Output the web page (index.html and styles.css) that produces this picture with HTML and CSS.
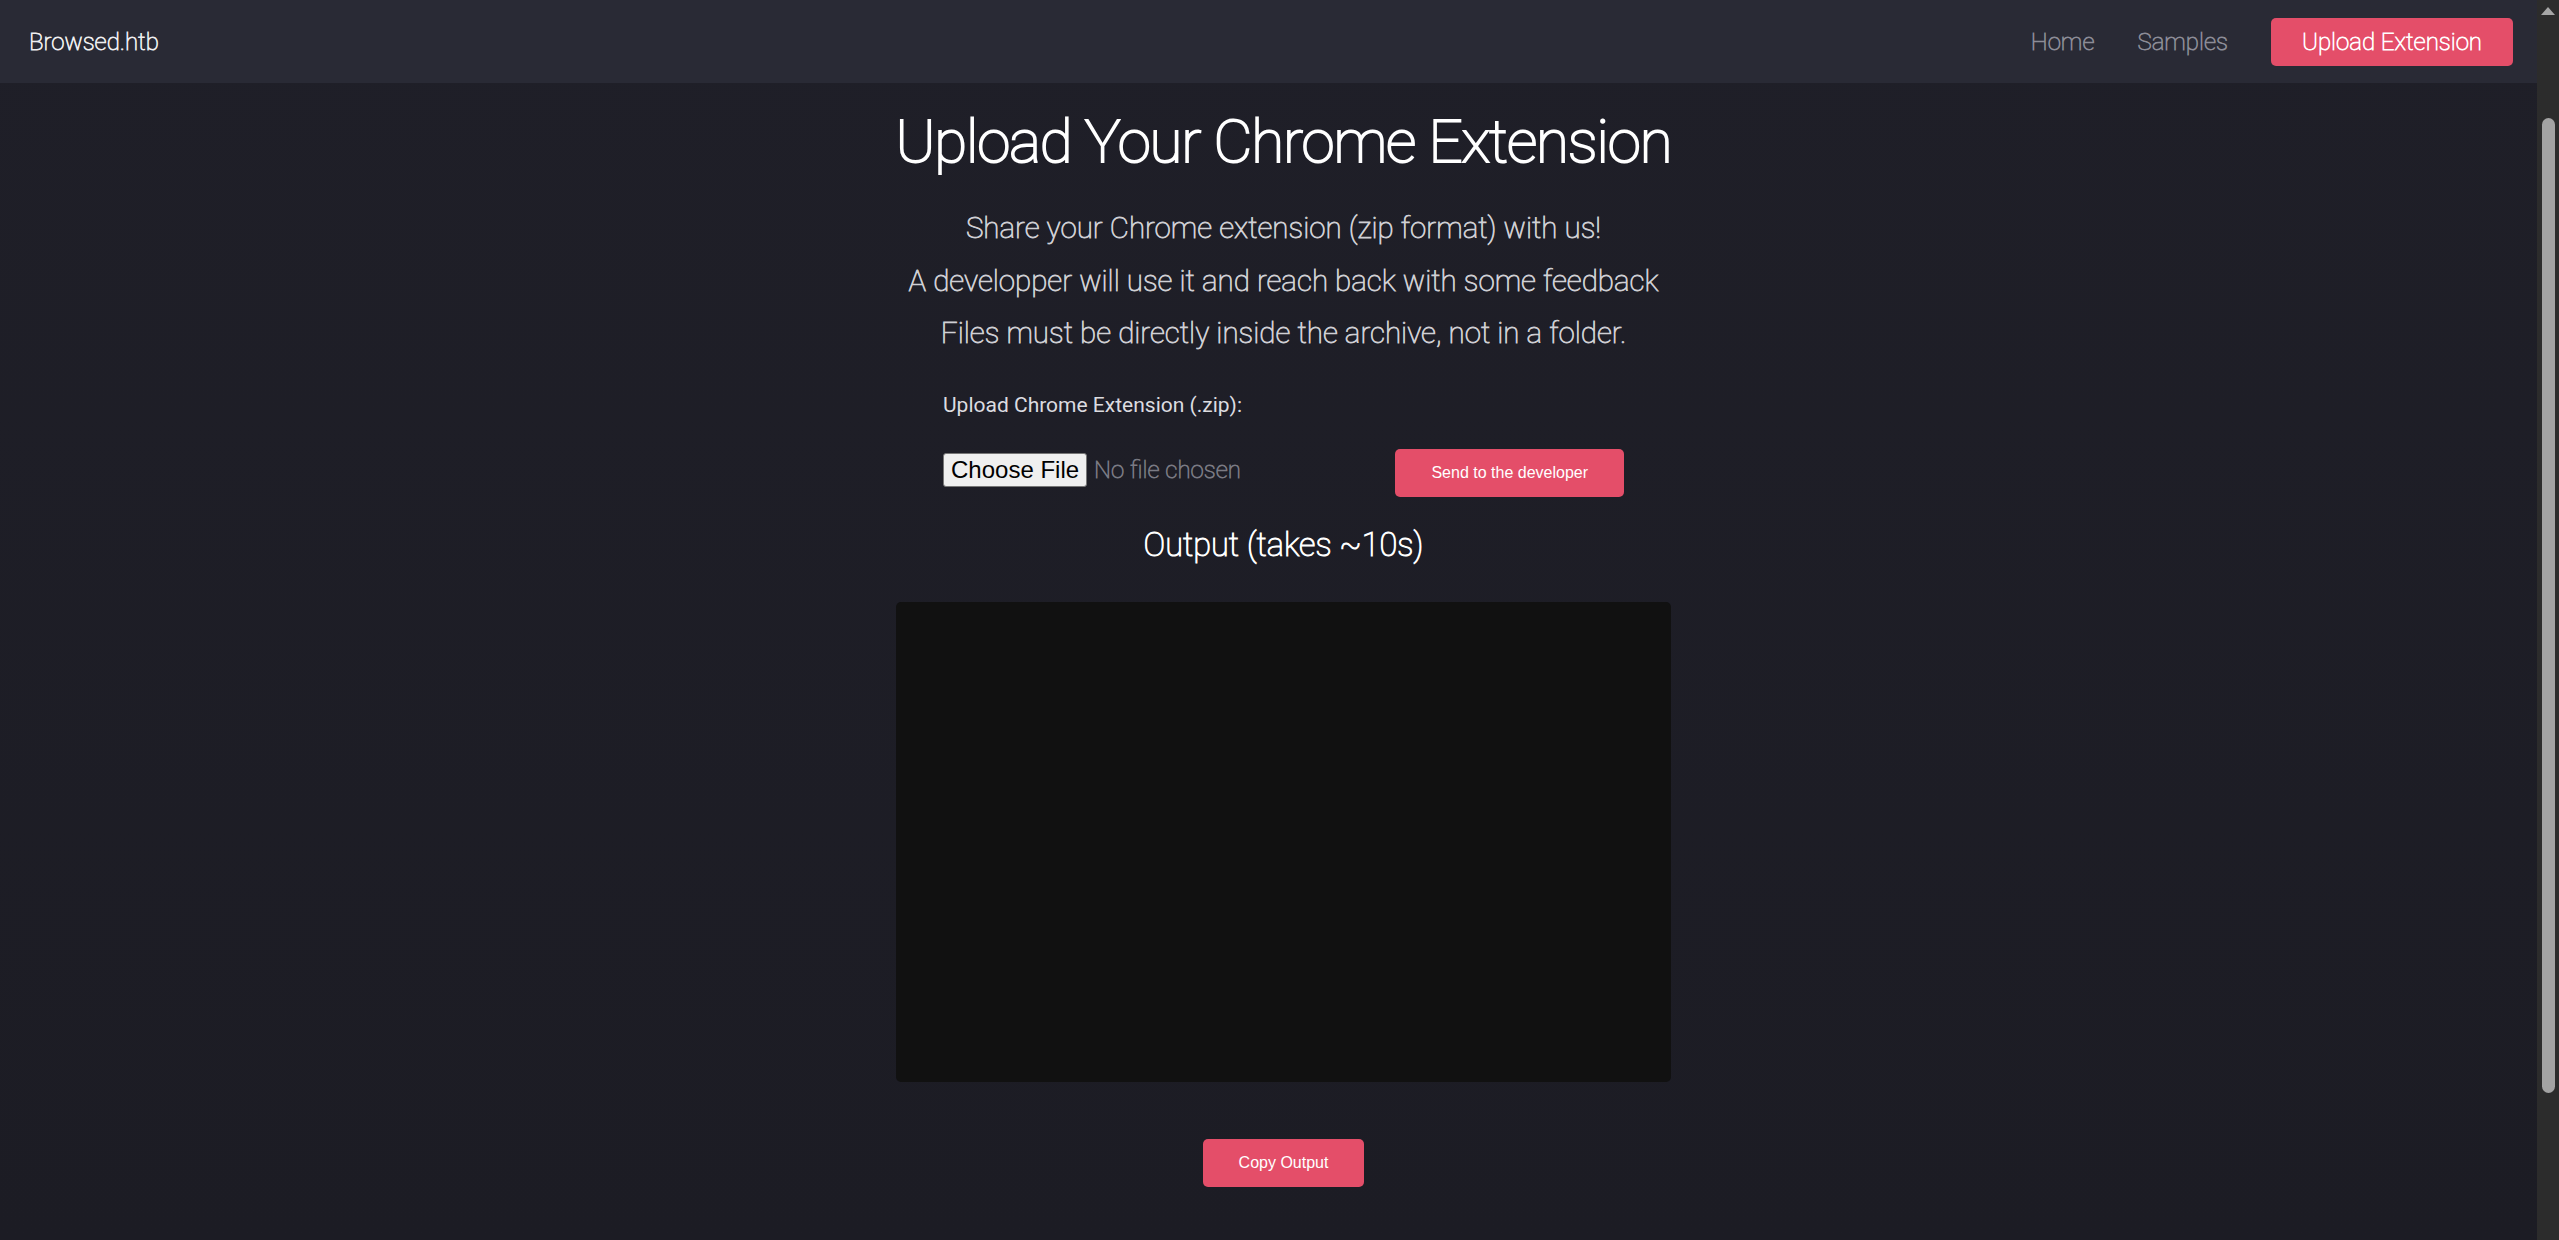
FILE: index.html
```html
<!DOCTYPE html>
<html lang="en">
<head>
<meta charset="utf-8">
<title>Browsed.htb - Upload Extension</title>
<link rel="stylesheet" href="styles.css">
</head>
<body>
  <div class="page">
    <header class="navbar">
      <a class="brand" href="#">Browsed.htb</a>
      <nav class="nav-links">
        <a class="nav-link" href="#">Home</a>
        <a class="nav-link" href="#">Samples</a>
        <a class="nav-btn" href="#">Upload Extension</a>
      </nav>
    </header>
    <main class="content">
      <h1 class="title">Upload Your Chrome Extension</h1>
      <div class="intro">
        <p>Share your Chrome extension (zip format) with us!</p>
        <p>A developper will use it and reach back with some feedback</p>
        <p>Files must be directly inside the archive, not in a folder.</p>
      </div>
      <form class="upload-form">
        <label class="form-label" for="extension">Upload Chrome Extension (.zip):</label>
        <div class="form-row">
          <input class="file-input" type="file" id="extension" accept=".zip">
          <button class="btn" type="button">Send to the developer</button>
        </div>
      </form>
      <h2 class="output-title">Output (takes ~10s)</h2>
      <div class="output-box"></div>
      <button class="btn copy-btn" type="button">Copy Output</button>
    </main>
  </div>
  <div class="scrollbar">
    <span class="scroll-arrow"></span>
    <span class="scroll-thumb"></span>
  </div>
</body>
</html>
```

FILE: styles.css
```css
html, body {
  margin: 0;
  height: 100%;
  overflow: hidden;
}

body {
  display: flex;
  background: linear-gradient(#1f1f28, #1c1c24);
  font-family: Roboto, "Liberation Sans", sans-serif;
}

/* Roboto Light is not installed: Roboto Thin thickened with a stroke */
.brand,
.nav-link,
.nav-btn,
.title,
.intro p,
.file-input,
.output-title {
  font-family: Roboto, sans-serif;
  font-weight: 100;
  -webkit-text-stroke: 0.032em currentColor;
}

.page {
  flex: 1;
  min-width: 0;
  display: flex;
  flex-direction: column;
}

.navbar {
  flex-shrink: 0;
  height: 83px;
  background: #292a35;
  display: flex;
  align-items: center;
  justify-content: space-between;
  padding: 0 24px 0 29px;
}

.brand {
  font-size: 24px;
  line-height: 28px;
  color: #eeeef0;
  text-decoration: none;
}

.nav-links {
  display: flex;
  align-items: center;
  gap: 43px;
}

.nav-link {
  font-size: 24px;
  line-height: 28px;
  color: #8c8c97;
  text-decoration: none;
}

.nav-btn {
  background: #e44e69;
  color: #fff;
  padding: 10px 31px;
  border-radius: 5px;
  font-size: 24px;
  line-height: 28px;
  text-decoration: none;
}

.content {
  display: flex;
  flex-direction: column;
  align-items: center;
  padding: 22px 0 0 30px;
}

.title {
  margin: 0;
  font-size: 60px;
  line-height: 74px;
  letter-spacing: -1.1px;
  color: #fff;
}

.intro {
  margin-top: 23px;
  text-align: center;
}

.intro p {
  margin: 0;
  font-size: 29.5px;
  line-height: 52.5px;
  color: #cfcfd4;
  -webkit-text-stroke-width: 0.028em;
}

.upload-form {
  width: 681px;
  margin-top: 33.5px;
}

.form-label {
  display: block;
  font-family: Roboto, sans-serif;
  font-size: 21px;
  line-height: 24px;
  font-weight: 400;
  color: #dcdce0;
}

.form-row {
  margin-top: 32px;
  display: flex;
  justify-content: space-between;
  align-items: flex-start;
}

.file-input {
  margin: 4px 0 0;
  font-size: 24px;
  color: #7a7a83;
}

.file-input::file-selector-button {
  height: 34px;
  margin: 0 7px 0 0;
  padding: 0 7px;
  font-family: "Liberation Sans", Arial, sans-serif;
  font-size: 24px;
  font-weight: 400;
  -webkit-text-stroke: 0;
  color: #000;
  background: #efefef;
  border: 1px solid #767676;
  border-radius: 3px;
}

.btn {
  flex-shrink: 0;
  white-space: nowrap;
  background: #e44e69;
  color: #fff;
  border: 0;
  border-radius: 5px;
  padding: 15px 36px;
  font-family: "Liberation Sans", Arial, sans-serif;
  font-size: 16px;
  line-height: 18px;
}

.output-title {
  margin: 29px 0 0;
  font-size: 32.5px;
  line-height: 38px;
  color: #fff;
}

.output-box {
  margin-top: 38px;
  width: 775px;
  height: 480px;
  background: #111111;
  border-radius: 5px;
}

.copy-btn {
  margin-top: 56.5px;
}

.scrollbar {
  flex-shrink: 0;
  width: 22px;
  background: #2c2c2c;
  display: flex;
  flex-direction: column;
  align-items: center;
}

.scroll-arrow {
  margin-top: 7px;
  width: 0;
  height: 0;
  border-left: 7.5px solid transparent;
  border-right: 7.5px solid transparent;
  border-bottom: 8px solid #a6a6a6;
}

.scroll-thumb {
  margin-top: 103px;
  width: 13px;
  height: 975px;
  border-radius: 6.5px;
  background: #a3a3a3;
}
```
